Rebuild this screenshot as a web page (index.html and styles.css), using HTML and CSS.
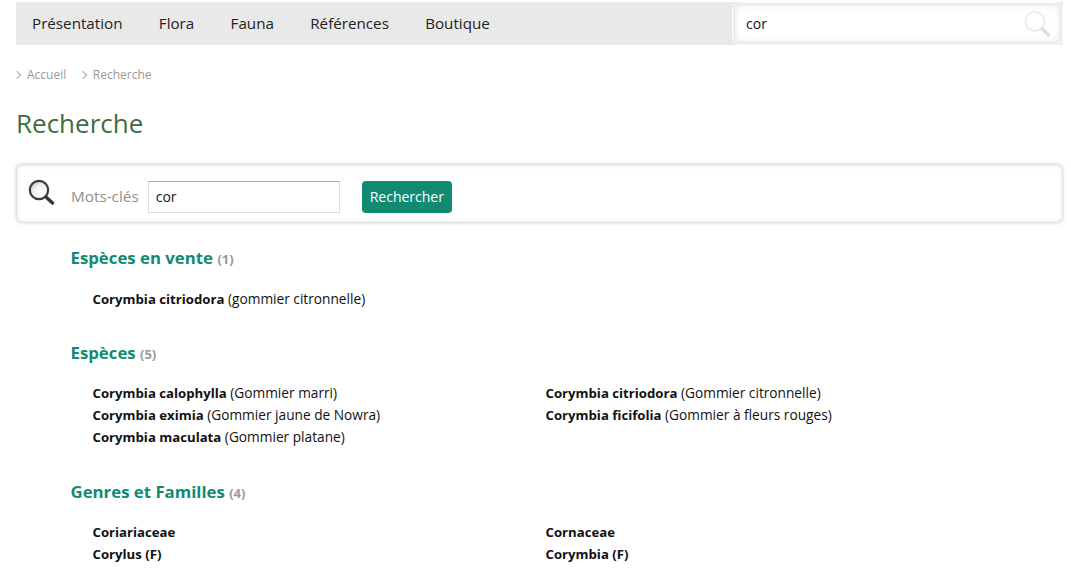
FILE: index.html
```html
<!DOCTYPE html>
<html lang="fr">
<head>
<meta charset="utf-8">
<title>Recherche</title>
<link rel="stylesheet" href="styles.css">
</head>
<body>
<nav class="topbar">
  <ul class="menu">
    <li><a href="#">Présentation</a></li>
    <li><a href="#">Flora</a></li>
    <li><a href="#">Fauna</a></li>
    <li><a href="#">Références</a></li>
    <li><a href="#">Boutique</a></li>
  </ul>
  <div class="topsearch">
    <span class="topsearch-value">cor</span>
    <svg class="topsearch-icon" width="28" height="28" viewBox="0 0 28 28" aria-hidden="true">
      <circle cx="12" cy="11.5" r="9.5" fill="#fff" stroke="#ececec" stroke-width="2"/>
      <path d="M19 18.5l6.5 6.5" stroke="#dedede" stroke-width="3.2" stroke-linecap="round"/>
    </svg>
  </div>
</nav>
<ol class="crumbs">
  <li><a href="#">Accueil</a></li>
  <li>Recherche</li>
</ol>
<h1 class="title">Recherche</h1>
<form class="searchbox">
  <svg class="searchbox-icon" width="28" height="28" viewBox="0 0 28 28" aria-hidden="true">
    <defs>
      <radialGradient id="lens" cx="0.6" cy="0.65" r="0.8">
        <stop offset="0" stop-color="#ffffff"/>
        <stop offset="0.55" stop-color="#eeeeee"/>
        <stop offset="1" stop-color="#a8a8a8"/>
      </radialGradient>
    </defs>
    <circle cx="11" cy="11" r="9.2" fill="url(#lens)" stroke="#3c3c3c" stroke-width="2.2"/>
    <path d="M18 18l6.5 6" stroke="#333" stroke-width="3.4" stroke-linecap="round"/>
  </svg>
  <label class="searchbox-label" for="q">Mots-clés</label>
  <input class="searchbox-input" id="q" type="text" value="cor">
  <button class="searchbox-button" type="button">Rechercher</button>
</form>
<section class="group group-first">
  <h2 class="group-title">Espèces en vente <span class="count">(1)</span></h2>
  <ul class="results">
    <li><b>Corymbia citriodora</b> (gommier citronnelle)</li>
  </ul>
</section>
<section class="group">
  <h2 class="group-title">Espèces <span class="count">(5)</span></h2>
  <ul class="results">
    <li><b>Corymbia calophylla</b> (Gommier marri)</li>
    <li><b>Corymbia citriodora</b> (Gommier citronnelle)</li>
    <li><b>Corymbia eximia</b> (Gommier jaune de Nowra)</li>
    <li><b>Corymbia ficifolia</b> (Gommier à fleurs rouges)</li>
    <li><b>Corymbia maculata</b> (Gommier platane)</li>
  </ul>
</section>
<section class="group">
  <h2 class="group-title">Genres et Familles <span class="count">(4)</span></h2>
  <ul class="results">
    <li><b>Coriariaceae</b></li>
    <li><b>Cornaceae</b></li>
    <li><b>Corylus (F)</b></li>
    <li><b>Corymbia (F)</b></li>
  </ul>
</section>
</body>
</html>
```
FILE: styles.css
```css
* { box-sizing: border-box; }
html, body { height: 100%; overflow: hidden; }
body {
  margin: 0;
  padding: 2px 8px 0 16px;
  background: #fff;
  color: #111;
  font-family: "Open Sans", sans-serif;
  font-size: 14px;
}
a { color: inherit; text-decoration: none; }
ul, ol { list-style: none; margin: 0; padding: 0; }

.topbar {
  display: flex;
  align-items: center;
  justify-content: space-between;
  height: 43px;
  background: #e9e9e9;
  padding: 0 3px 0 16px;
}
.menu { display: flex; gap: 36.3px; margin-top: -2px; font-size: 15.2px; color: #222; }
.topsearch {
  display: flex;
  align-items: center;
  justify-content: space-between;
  width: 325px;
  height: 37px;
  padding: 0 9px 0 11px;
  background: #fff;
  border-radius: 4px;
  box-shadow: 0 0 0 1px #e4e4e4, 0 0 0 3px #f4f4f4, inset 0 0 6px rgba(0,0,0,.1);
  font-size: 14px;
  color: #111;
}
.topsearch-value { margin-top: -1px; }
.topsearch-icon { display: block; }

.crumbs { display: flex; gap: 15.5px; margin-top: 21px; height: 17px; font-size: 12px; line-height: 17px; color: #999; }
.crumbs li { display: flex; align-items: center; }
.crumbs li::before {
  content: "";
  width: 5px;
  height: 5px;
  margin: 0 7px 0 -2px;
  border-top: 1px solid #aaa;
  border-right: 1px solid #aaa;
  transform: rotate(45deg);
}

.title { margin: 22px 0 0; font-size: 26px; font-weight: 400; line-height: 36px; color: #3f6b3f; }

.searchbox {
  display: flex;
  align-items: center;
  height: 57px;
  margin: 24px 1px 0;
  padding: 7px 10px 0 11px;
  background: #fff;
  border-radius: 5px;
  box-shadow: 0 0 4px rgba(0,0,0,.3), inset 0 0 5px rgba(0,0,0,.1);
}
.searchbox-icon { margin-top: -8px; }
.searchbox-label { margin: -2px 0 0 15px; font-size: 15.3px; color: #8f8f8f; }
.searchbox-input {
  width: 192px;
  height: 32px;
  margin-left: 9px;
  padding: 0 7px 2px;
  border: 1px solid #ddd;
  border-top-color: #aaa;
  background: #fff;
  color: #111;
  font: 14px "Open Sans", sans-serif;
}
.searchbox-button {
  height: 32px;
  margin-left: 22px;
  padding: 0 8px 2px;
  border: 0;
  border-radius: 4px;
  background: #108a72;
  color: #fff;
  font: 14px "Open Sans", sans-serif;
}

.group { margin-left: 54.5px; }
.group-first { margin-top: 24px; }
.group + .group { margin-top: 32px; }
.group-first + .group { margin-top: 31px; }
.group-title { margin: 0; font-size: 16.8px; font-weight: 700; line-height: 24px; color: #108a72; }
.count { font-size: 13px; color: #999; }
.results {
  display: grid;
  grid-template-columns: 453px 1fr;
  margin: 16px 0 0 22px;
  font-size: 13.7px;
  line-height: 22px;
}
.group-first .results { margin-top: 17px; }
.results b { font-size: 13.2px; font-weight: 700; }
```
